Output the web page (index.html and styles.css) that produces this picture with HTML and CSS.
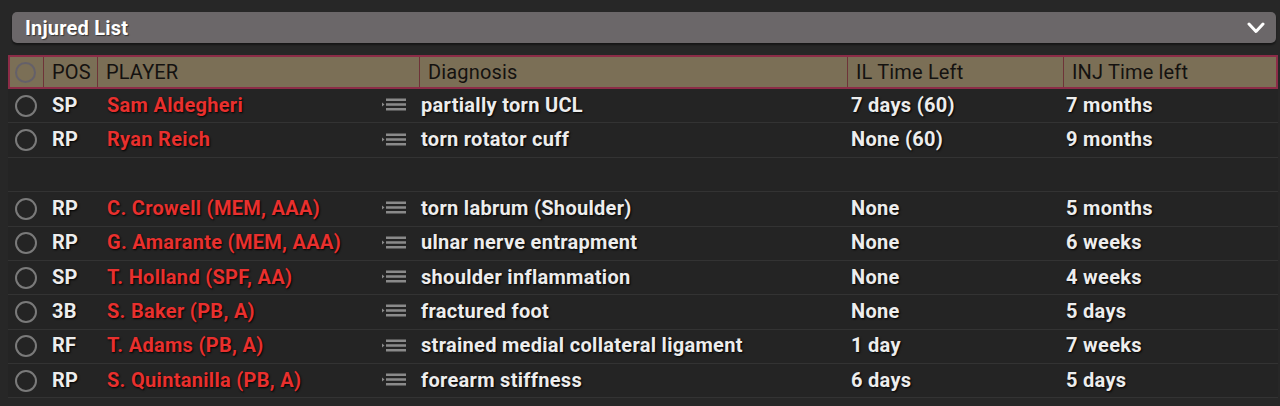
FILE: index.html
```html
<!DOCTYPE html>
<html>
<head>
<meta charset="utf-8">
<link rel="stylesheet" href="styles.css">
</head>
<body>
<div class="panel">
  <div class="titlebar">
    <span class="title">Injured List</span>
    <svg class="chev" width="18" height="12" viewBox="0 0 18 12"><path d="M2 2 L9 9.5 L16 2" fill="none" stroke="#fff" stroke-width="3" stroke-linecap="round" stroke-linejoin="round"/></svg>
  </div>
  <div class="table">
    <div class="head">
      <div class="hc hsel"><span class="hcircle"></span></div>
      <div class="hc">POS</div>
      <div class="hc">PLAYER</div>
      <div class="hc">Diagnosis</div>
      <div class="hc">IL Time Left</div>
      <div class="hc hlast">INJ Time left</div>
    </div>

    <div class="row">
      <div class="c csel"><span class="radio"></span></div>
      <div class="c cpos">SP</div>
      <div class="c cname"><span class="nm">Sam Aldegheri</span><svg class="li" width="24" height="15" viewBox="0 0 24 15"><path d="M0 5.5 L2.5 7.5 L0 9.5Z" fill="#8a8a8a"/><rect x="4" y="1.5" width="20" height="2.5" fill="#8a8a8a"/><rect x="4" y="6.25" width="20" height="2.5" fill="#8a8a8a"/><rect x="4" y="11" width="20" height="2.5" fill="#8a8a8a"/></svg></div>
      <div class="c cdiag">partially torn UCL</div>
      <div class="c cil">7 days (60)</div>
      <div class="c cinj">7 months</div>
    </div>
    <div class="row">
      <div class="c csel"><span class="radio"></span></div>
      <div class="c cpos">RP</div>
      <div class="c cname"><span class="nm">Ryan Reich</span><svg class="li" width="24" height="15" viewBox="0 0 24 15"><path d="M0 5.5 L2.5 7.5 L0 9.5Z" fill="#8a8a8a"/><rect x="4" y="1.5" width="20" height="2.5" fill="#8a8a8a"/><rect x="4" y="6.25" width="20" height="2.5" fill="#8a8a8a"/><rect x="4" y="11" width="20" height="2.5" fill="#8a8a8a"/></svg></div>
      <div class="c cdiag">torn rotator cuff</div>
      <div class="c cil">None (60)</div>
      <div class="c cinj">9 months</div>
    </div>
    <div class="row empty"></div>
    <div class="row">
      <div class="c csel"><span class="radio"></span></div>
      <div class="c cpos">RP</div>
      <div class="c cname"><span class="nm">C. Crowell (MEM, AAA)</span><svg class="li" width="24" height="15" viewBox="0 0 24 15"><path d="M0 5.5 L2.5 7.5 L0 9.5Z" fill="#8a8a8a"/><rect x="4" y="1.5" width="20" height="2.5" fill="#8a8a8a"/><rect x="4" y="6.25" width="20" height="2.5" fill="#8a8a8a"/><rect x="4" y="11" width="20" height="2.5" fill="#8a8a8a"/></svg></div>
      <div class="c cdiag">torn labrum (Shoulder)</div>
      <div class="c cil">None</div>
      <div class="c cinj">5 months</div>
    </div>
    <div class="row">
      <div class="c csel"><span class="radio"></span></div>
      <div class="c cpos">RP</div>
      <div class="c cname"><span class="nm">G. Amarante (MEM, AAA)</span><svg class="li" width="24" height="15" viewBox="0 0 24 15"><path d="M0 5.5 L2.5 7.5 L0 9.5Z" fill="#8a8a8a"/><rect x="4" y="1.5" width="20" height="2.5" fill="#8a8a8a"/><rect x="4" y="6.25" width="20" height="2.5" fill="#8a8a8a"/><rect x="4" y="11" width="20" height="2.5" fill="#8a8a8a"/></svg></div>
      <div class="c cdiag">ulnar nerve entrapment</div>
      <div class="c cil">None</div>
      <div class="c cinj">6 weeks</div>
    </div>
    <div class="row">
      <div class="c csel"><span class="radio"></span></div>
      <div class="c cpos">SP</div>
      <div class="c cname"><span class="nm">T. Holland (SPF, AA)</span><svg class="li" width="24" height="15" viewBox="0 0 24 15"><path d="M0 5.5 L2.5 7.5 L0 9.5Z" fill="#8a8a8a"/><rect x="4" y="1.5" width="20" height="2.5" fill="#8a8a8a"/><rect x="4" y="6.25" width="20" height="2.5" fill="#8a8a8a"/><rect x="4" y="11" width="20" height="2.5" fill="#8a8a8a"/></svg></div>
      <div class="c cdiag">shoulder inflammation</div>
      <div class="c cil">None</div>
      <div class="c cinj">4 weeks</div>
    </div>
    <div class="row">
      <div class="c csel"><span class="radio"></span></div>
      <div class="c cpos">3B</div>
      <div class="c cname"><span class="nm">S. Baker (PB, A)</span><svg class="li" width="24" height="15" viewBox="0 0 24 15"><path d="M0 5.5 L2.5 7.5 L0 9.5Z" fill="#8a8a8a"/><rect x="4" y="1.5" width="20" height="2.5" fill="#8a8a8a"/><rect x="4" y="6.25" width="20" height="2.5" fill="#8a8a8a"/><rect x="4" y="11" width="20" height="2.5" fill="#8a8a8a"/></svg></div>
      <div class="c cdiag">fractured foot</div>
      <div class="c cil">None</div>
      <div class="c cinj">5 days</div>
    </div>
    <div class="row">
      <div class="c csel"><span class="radio"></span></div>
      <div class="c cpos">RF</div>
      <div class="c cname"><span class="nm">T. Adams (PB, A)</span><svg class="li" width="24" height="15" viewBox="0 0 24 15"><path d="M0 5.5 L2.5 7.5 L0 9.5Z" fill="#8a8a8a"/><rect x="4" y="1.5" width="20" height="2.5" fill="#8a8a8a"/><rect x="4" y="6.25" width="20" height="2.5" fill="#8a8a8a"/><rect x="4" y="11" width="20" height="2.5" fill="#8a8a8a"/></svg></div>
      <div class="c cdiag">strained medial collateral ligament</div>
      <div class="c cil">1 day</div>
      <div class="c cinj">7 weeks</div>
    </div>
    <div class="row">
      <div class="c csel"><span class="radio"></span></div>
      <div class="c cpos">RP</div>
      <div class="c cname"><span class="nm">S. Quintanilla (PB, A)</span><svg class="li" width="24" height="15" viewBox="0 0 24 15"><path d="M0 5.5 L2.5 7.5 L0 9.5Z" fill="#8a8a8a"/><rect x="4" y="1.5" width="20" height="2.5" fill="#8a8a8a"/><rect x="4" y="6.25" width="20" height="2.5" fill="#8a8a8a"/><rect x="4" y="11" width="20" height="2.5" fill="#8a8a8a"/></svg></div>
      <div class="c cdiag">forearm stiffness</div>
      <div class="c cil">6 days</div>
      <div class="c cinj">5 days</div>
    </div>
  </div>
</div>
</body>
</html>
```

FILE: styles.css
```css
html, body {
  margin: 0;
  padding: 0;
  background: #272727;
  height: 100%;
  overflow: hidden;
}
body {
  font-family: Roboto, "Liberation Sans", sans-serif;
}
.panel {
  padding: 12px 2px 0 8px;
}
.titlebar {
  margin: 0 2px 0 4px;
  height: 31px;
  background: #6b6769;
  border-radius: 5px;
  box-shadow: 0 2px 2px rgba(0,0,0,0.45);
  display: flex;
  align-items: center;
  justify-content: space-between;
  padding: 0 11px 0 13px;
  box-sizing: border-box;
}
.title {
  color: #fff;
  font-size: 20px;
  font-weight: 700;
  letter-spacing: 0.2px;
  text-shadow: 1px 1px 1px rgba(0,0,0,0.5);
}
.chev {
  display: block;
}
.table {
  margin-top: 12px;
}
.head {
  display: grid;
  grid-template-columns: 34px 54px 322px 428px 216px 1fr;
  height: 34px;
  box-sizing: border-box;
  border: 2px solid #8c2c47;
  background: #7b6f56;
}
.hc {
  display: flex;
  align-items: center;
  padding-left: 8px;
  font-size: 20px;
  color: #141210;
  letter-spacing: 0.15px;
  border-right: 1px solid #6e3338;
}
.hlast { border-right: none; }
.hsel { padding-left: 5px; }
.hcircle {
  width: 21px;
  height: 21px;
  border-radius: 50%;
  border: 2px solid #5f5d6e;
  box-sizing: border-box;
  opacity: 0.8;
}
.row {
  display: grid;
  grid-template-columns: 34px 54px 322px 428px 216px 1fr;
  height: 34.375px;
  box-sizing: border-box;
  border-bottom: 1px solid #333333;
  background: #242424;
}
.c {
  display: flex;
  align-items: center;
  padding-bottom: 2px;
  font-size: 20px;
  font-weight: 700;
  letter-spacing: 0.3px;
  color: #ededed;
  text-shadow: 1px 1px 2px #000;
  white-space: nowrap;
}
.csel { padding-left: 7px; padding-bottom: 0; }
.radio {
  width: 22px;
  height: 22px;
  border-radius: 50%;
  border: 2px solid #7a7a7a;
  box-sizing: border-box;
}
.cpos { padding-left: 10px; }
.cname {
  padding-left: 11px;
  padding-right: 12px;
  justify-content: space-between;
}
.nm { color: #e8302e; }
.li { display: block; }
.cdiag { padding-left: 3px; }
.cil { padding-left: 5px; }
.cinj { padding-left: 4px; }
```
